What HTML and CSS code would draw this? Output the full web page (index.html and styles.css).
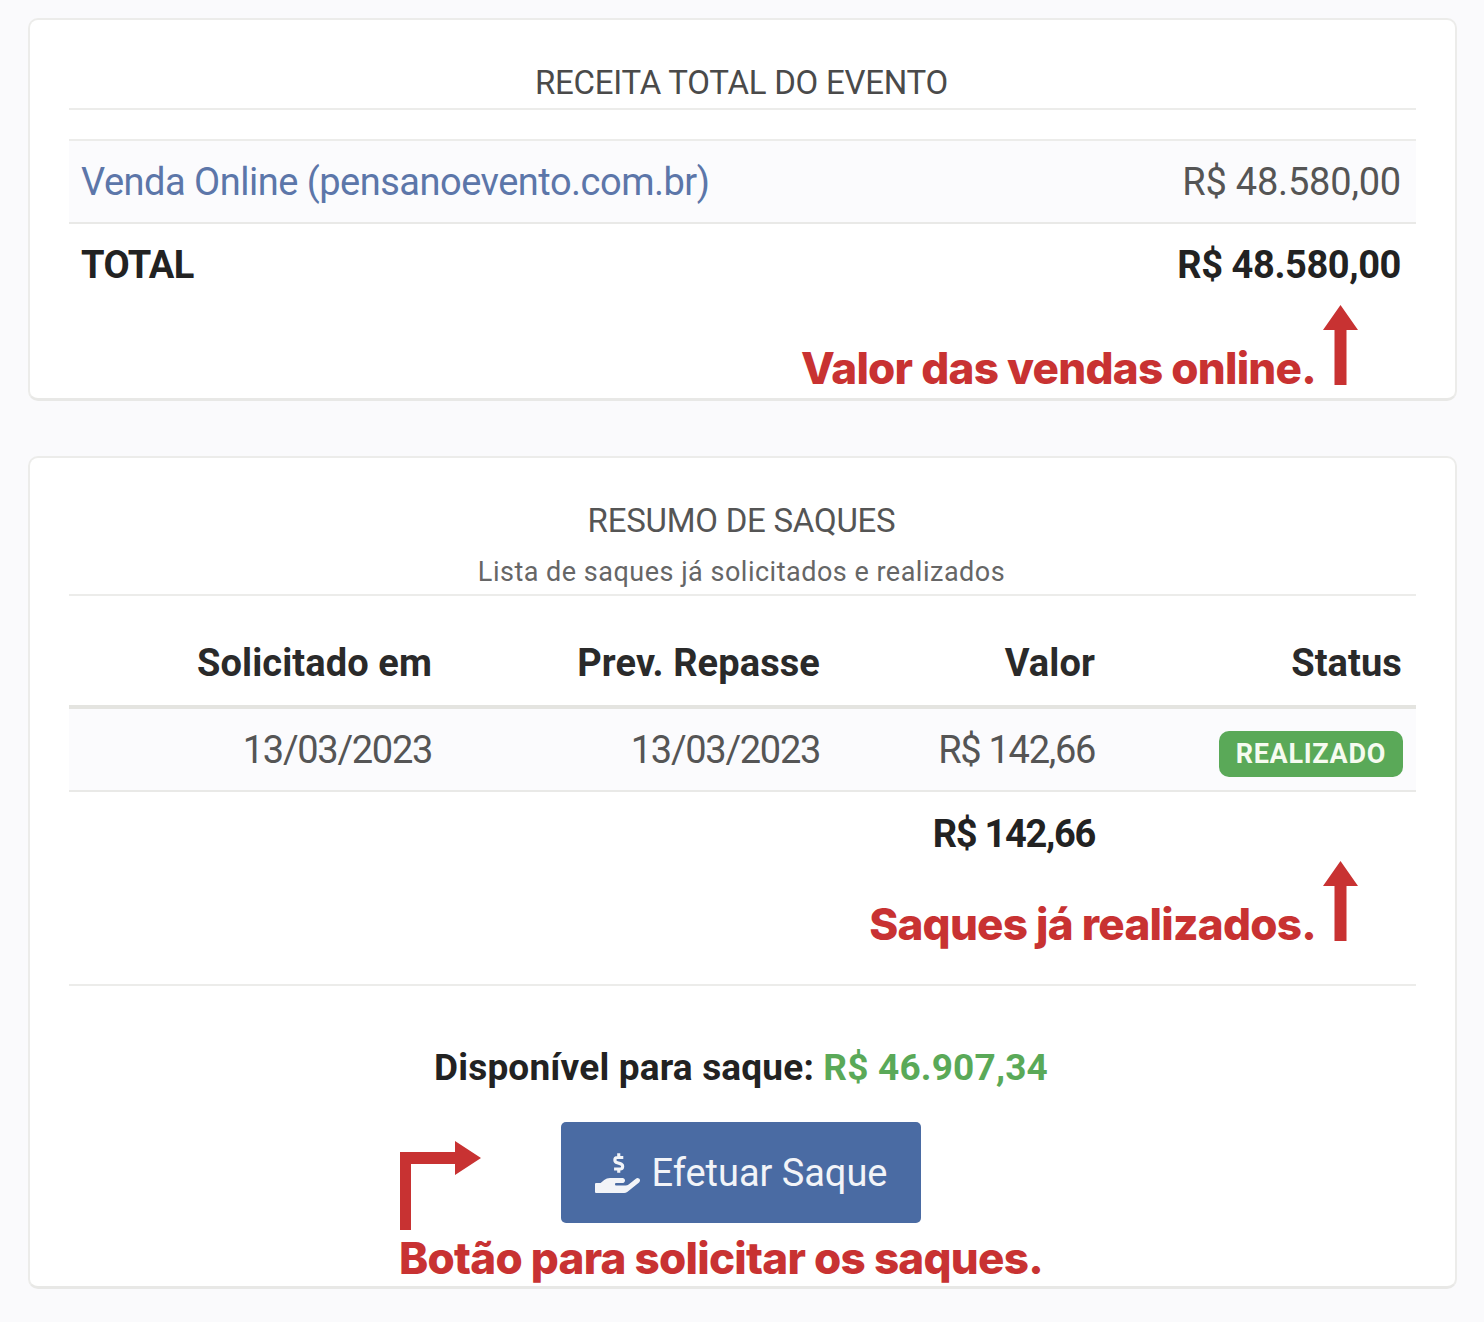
FILE: index.html
```html
<!DOCTYPE html>
<html lang="pt-BR">
<head>
<meta charset="utf-8">
<title>Receita e saques</title>
<link rel="stylesheet" href="styles.css">
</head>
<body>
<main class="page">
  <section class="card card-revenue">
    <h2 class="card-title">RECEITA TOTAL DO EVENTO</h2>
    <table class="data data-revenue">
      <tbody>
        <tr class="row-striped">
          <td class="cell-left"><a class="link" href="#">Venda Online (pensanoevento.com.br)</a></td>
          <td class="cell-right">R$ 48.580,00</td>
        </tr>
        <tr class="row-total">
          <td class="cell-left">TOTAL</td>
          <td class="cell-right">R$ 48.580,00</td>
        </tr>
      </tbody>
    </table>
    <div class="note note-revenue">
      <span class="note-text">Valor das vendas online.</span>
      <svg class="arrow-up" viewBox="0 0 35 80" aria-hidden="true"><path d="M17.5 0 35 25H23.5V80H11.5V25H0z"/></svg>
    </div>
  </section>

  <section class="card card-withdrawals">
    <header class="card-head">
      <h2 class="card-title card-title-compact">RESUMO DE SAQUES</h2>
      <p class="card-subtitle">Lista de saques já solicitados e realizados</p>
    </header>
    <table class="data data-withdrawals">
      <colgroup>
        <col class="col-a"><col class="col-b"><col class="col-c"><col class="col-d">
      </colgroup>
      <thead>
        <tr class="row-head">
          <th>Solicitado em</th>
          <th>Prev. Repasse</th>
          <th>Valor</th>
          <th>Status</th>
        </tr>
      </thead>
      <tbody>
        <tr class="row-striped">
          <td>13/03/2023</td>
          <td>13/03/2023</td>
          <td>R$ 142,66</td>
          <td><span class="badge">REALIZADO</span></td>
        </tr>
        <tr class="row-total">
          <td></td>
          <td></td>
          <td>R$ 142,66</td>
          <td></td>
        </tr>
      </tbody>
    </table>
    <div class="note note-done">
      <span class="note-text">Saques já realizados.</span>
      <svg class="arrow-up" viewBox="0 0 35 80" aria-hidden="true"><path d="M17.5 0 35 25H23.5V80H11.5V25H0z"/></svg>
    </div>
    <div class="available">
      <p class="available-line">Disponível para saque: <span class="available-value">R$ 46.907,34</span></p>
      <button class="btn" type="button">
        <svg class="btn-icon" viewBox="0 0 576 512" aria-hidden="true">
          <path d="M565.27 328.1c-11.8-10.7-30.2-10-42.6 0L430.3 402c-11.3 9.1-25.4 14-40 14H272c-8.8 0-16-7.2-16-16s7.2-16 16-16h78.3c15.9 0 30.7-10.9 33.3-26.6 3.3-20-12.1-37.4-31.6-37.4H192c-27 0-53.1 9.3-74.1 26.3L71.4 384H16c-8.8 0-16 7.2-16 16v96c0 8.8 7.2 16 16 16h356.7c14.5 0 28.6-4.9 40-14l151.2-121c15.2-12.2 16.4-34.9 2.1-49.9z"/>
          <path class="btn-icon-dollar" d="M362 58h-76c-20 0-32 12-32 32s12 30 32 36l36 10c20 6 32 16 32 36s-12 32-32 32h-78M304 4v54M304 204v48"/>
        </svg>
        <span>Efetuar Saque</span>
      </button>
    </div>
    <div class="note-button">
      <svg class="arrow-corner" viewBox="0 0 82 89" aria-hidden="true"><path d="M0 89V11H55V0L81 17 55 34V23H11V89z"/></svg>
      <span class="note-text">Botão para solicitar os saques.</span>
    </div>
  </section>
</main>
</body>
</html>
```
FILE: styles.css
```css
* { box-sizing: border-box; }
html, body { margin: 0; padding: 0; }
body {
  background: #fafafc;
  font-family: Roboto, "Liberation Sans", sans-serif;
  color: #444;
}
.page {
  padding: 18px 27px 0 28px;
  display: flex;
  flex-direction: column;
  gap: 55px;
}
.card {
  position: relative;
  background: #fff;
  border: 2px solid #ececea;
  border-bottom: 3px solid #e8e8e6;
  border-radius: 10px;
  padding: 0 39px;
}
.card-revenue { height: 383px; padding-top: 42px; }
.card-withdrawals { height: 833px; padding-top: 42px; }
.card-title {
  margin: 0;
  font-size: 33px;
  line-height: 42px;
  font-weight: 400;
  text-align: center;
  color: #4a4a4a;
  letter-spacing: -0.25px;
  padding: 0 2px 4px 0;
  border-bottom: 2px solid #ececea;
}
.card-title-compact { border-bottom: 0; padding-bottom: 0; color: #555; }
.card-head { border-bottom: 2px solid #ececea; height: 96px; }
.card-subtitle {
  margin: 13px 2px 0 0;
  font-size: 27px;
  line-height: 34px;
  text-align: center;
  color: #666;
  letter-spacing: 0.5px;
}
.data {
  width: 100%;
  border-collapse: collapse;
  table-layout: fixed;
  font-size: 38px;
}
.data td, .data th {
  padding: 0 14px 0 12px;
  height: 82px;
  text-align: right;
}
.data-revenue { margin-top: 29px; border-top: 2px solid #ececea; }
.data-revenue td { padding-right: 15px; letter-spacing: -0.2px; }
.data-revenue .row-striped td { height: 83px; padding-top: 1px; }
.data-revenue .row-total td { letter-spacing: -0.4px; }
.data .cell-left { text-align: left; }
.data-revenue .row-striped .cell-left { letter-spacing: -0.5px; }
.data-revenue .row-total .cell-left { letter-spacing: -0.6px; }
.link { color: #5c76a9; text-decoration: none; }
.row-striped { background: #fbfbfd; border-bottom: 2px solid #e9e9e7; }
.row-striped td { color: #555; }
.row-total td { color: #222; font-weight: 700; }
.data-withdrawals td { letter-spacing: -1.3px; }
.data-withdrawals .row-striped td { height: 84px; }
.data-withdrawals .row-total td { padding-top: 2px; }
.data-withdrawals .col-a { width: 377px; }
.data-withdrawals .col-b { width: 388px; }
.data-withdrawals .col-c { width: 275px; }
.data-withdrawals .col-d { width: 307px; }
.row-head { border-bottom: 4px solid #e4e4e0; }
.data .row-head th { height: 111px; padding-top: 24px; color: #2a2a2a; font-weight: 700; letter-spacing: 0.1px; }
.badge {
  display: inline-block;
  background: #5aa958;
  color: #f6fbf0;
  font-size: 27px;
  line-height: 46px;
  height: 46px;
  font-weight: 700;
  border-radius: 10px;
  padding: 0 17px;
  letter-spacing: 0.7px;
  vertical-align: middle;
  margin: 8px -1px 0 0;
}
.note {
  position: absolute;
  right: 97px;
  display: flex;
  align-items: flex-end;
  gap: 7px;
}
.note-revenue { top: 285px; }
.note-done { top: 403px; }
.note .note-text { margin-bottom: -9px; }
.note-text {
  font-family: Inter, Lato, sans-serif;
  font-size: 44px;
  line-height: 52px;
  font-weight: 800;
  letter-spacing: -0.75px;
  color: #c83232;
  white-space: nowrap;
}
.arrow-up { width: 35px; height: 80px; display: block; fill: #c83232; }
.available {
  position: absolute;
  left: 39px;
  right: 39px;
  top: 526px;
  border-top: 2px solid #ececea;
  display: flex;
  flex-direction: column;
  align-items: center;
}
.available-line {
  margin: 59px 3px 0 0;
  font-size: 37px;
  line-height: 46px;
  font-weight: 700;
  color: #222;
  letter-spacing: 0.17px;
}
.available-value { color: #5aa958; }
.btn {
  margin: 31px 3px 0 0;
  width: 360px;
  height: 101px;
  background: #4a6ba3;
  border: 0;
  border-radius: 5px;
  color: #f2f4f8;
  font-family: Roboto, sans-serif;
  font-size: 38px;
  letter-spacing: -0.05px;
  display: flex;
  align-items: center;
  justify-content: center;
  gap: 12px;
}
.btn-icon { width: 45px; height: 40px; fill: #f2f4f8; }
.btn-icon-dollar { fill: none; stroke: #f2f4f8; stroke-width: 40; }
.note-button {
  position: absolute;
  left: 370px;
  top: 683px;
  display: flex;
  flex-direction: column;
}
.note-button .note-text { margin: 2px 0 0 -1px; }
.arrow-corner { width: 82px; height: 89px; display: block; fill: #c83232; }
```
